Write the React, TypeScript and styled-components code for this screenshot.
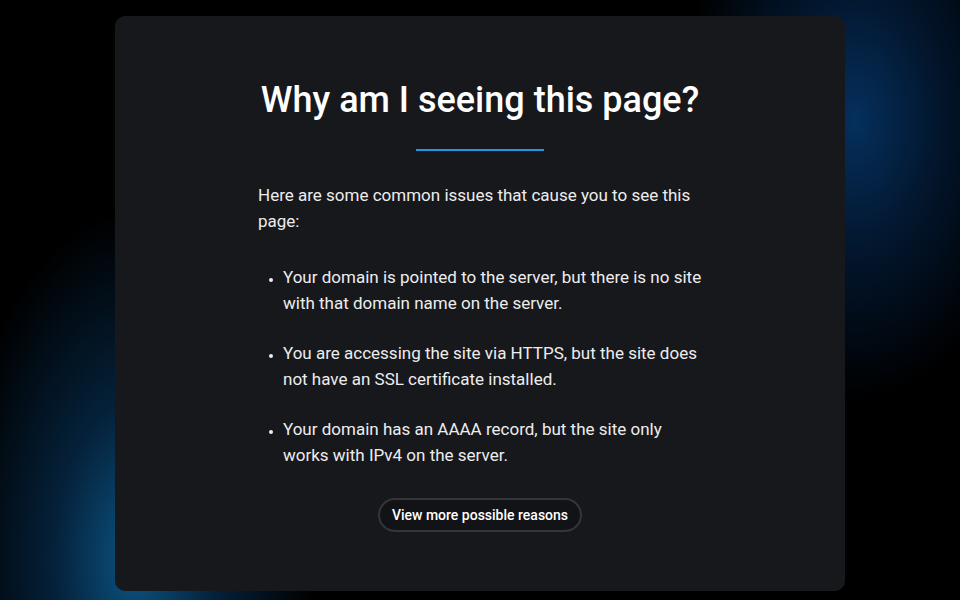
import React from "react";
import styled, { createGlobalStyle } from "styled-components";

const Global = createGlobalStyle`
  html, body { margin: 0; padding: 0; background: #000; }
  body { font-family: Roboto, "Liberation Sans", sans-serif; }
  * { box-sizing: border-box; }
`;

const Page = styled.div`
  width: 960px;
  height: 600px;
  overflow: hidden;
  padding-top: 16px;
  display: flex;
  justify-content: center;
  align-items: flex-start;
  background:
    radial-gradient(ellipse 180px 350px at 135px 560px, rgba(12, 88, 138, 0.95), rgba(8, 60, 105, 0.55) 45%, rgba(0, 0, 0, 0) 100%),
    radial-gradient(ellipse 175px 280px at 855px 120px, rgba(5, 50, 98, 0.95), rgba(4, 38, 78, 0.6) 45%, rgba(0, 0, 0, 0) 100%),
    #000;
`;

const Card = styled.main`
  width: 730px;
  height: 575px;
  background: #17181c;
  border-radius: 10px;
  padding: 63px 0 0;
  display: flex;
  flex-direction: column;
  align-items: center;
  color: #f2f2f2;
`;

const Title = styled.h1`
  margin: 0;
  font-size: 36px;
  line-height: 43px;
  font-weight: 500;
  color: #ffffff;
  text-align: center;
`;

const Divider = styled.div`
  width: 128px;
  height: 2px;
  background: #1f9ae0;
  margin-top: 27px;
`;

const Content = styled.section`
  width: 444px;
  margin-top: 31px;
  font-size: 17px;
  line-height: 26px;
  color: #ededed;
`;

const Intro = styled.p`
  margin: 0;
`;

const Reasons = styled.ul`
  margin: 30px 0 0;
  padding-left: 25px;
  list-style: disc;
`;

const Reason = styled.li`
  & + & {
    margin-top: 24px;
  }
  &::marker {
    font-size: 12px;
  }
`;

const MoreButton = styled.button`
  margin-top: 30px;
  padding: 7px 12px 6px;
  border: 2px solid #33353a;
  border-radius: 999px;
  background: #121316;
  color: #ffffff;
  font-family: Roboto, "Liberation Sans", sans-serif;
  font-size: 14px;
  line-height: 17px;
  font-weight: 500;
  cursor: pointer;
`;

export default function App() {
  return (
    <>
      <Global />
      <Page>
        <Card>
          <Title>Why am I seeing this page?</Title>
          <Divider />
          <Content>
            <Intro>Here are some common issues that cause you to see this page:</Intro>
            <Reasons>
              <Reason>Your domain is pointed to the server, but there is no site with that domain name on the server.</Reason>
              <Reason>You are accessing the site via HTTPS, but the site does not have an SSL certificate installed.</Reason>
              <Reason>Your domain has an AAAA record, but the site only works with IPv4 on the server.</Reason>
            </Reasons>
          </Content>
          <MoreButton>View more possible reasons</MoreButton>
        </Card>
      </Page>
    </>
  );
}
